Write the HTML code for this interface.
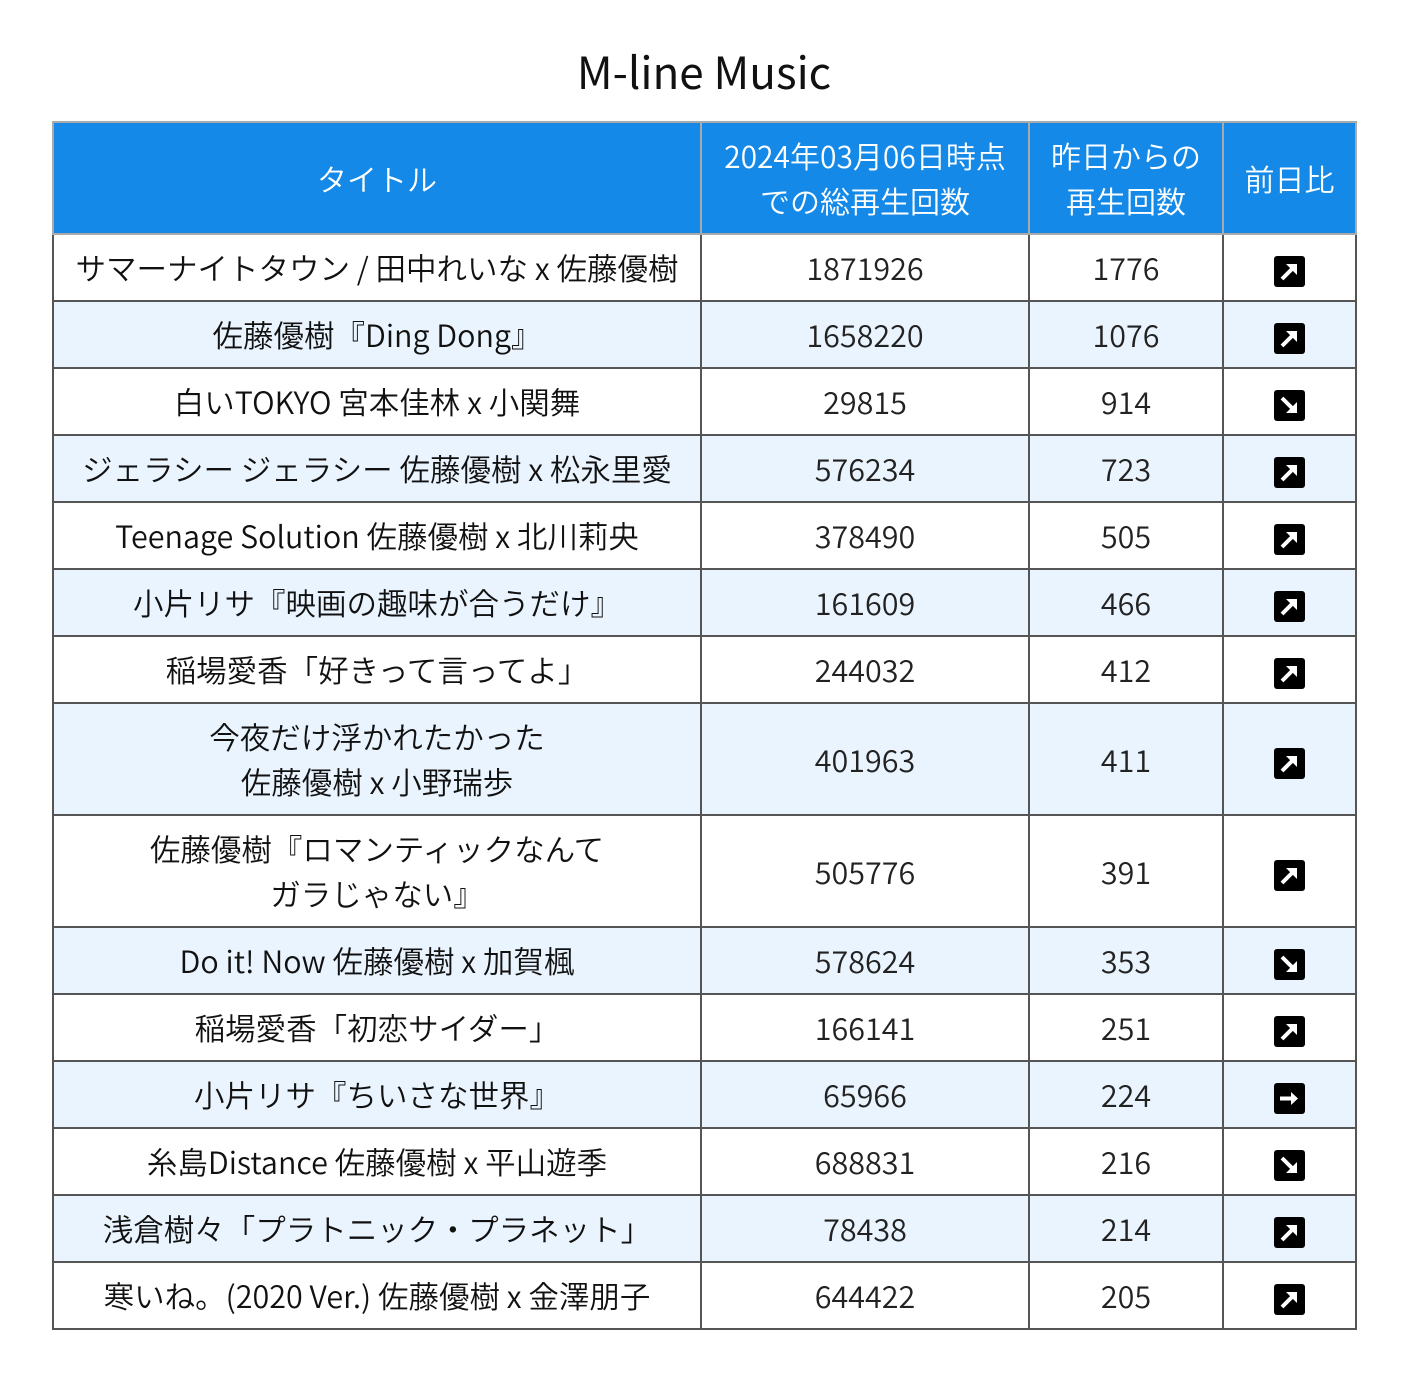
<!DOCTYPE html><html><head><meta charset="utf-8"><style>
body{margin:0;width:1408px;height:1383px;background:#fff;font-family:"Liberation Sans","Noto Sans CJK JP",sans-serif;position:relative;overflow:hidden}
h1{position:absolute;top:40px;left:0;width:1408px;text-align:center;margin:0;font-weight:400;font-size:44px;font-family:"Noto Sans CJK JP",sans-serif;color:#111;line-height:60px}
table{position:absolute;left:52px;top:121px;border-collapse:collapse;font-family:"Noto Sans CJK JP",sans-serif;font-size:30.5px;font-weight:350;color:#111}
td,th{border:2px solid #555;text-align:center;padding:0;line-height:45px}
th{background:#1589e8;color:#fff;font-weight:350;font-size:30px;border-color:#aaa;height:110px}
tr:nth-child(odd) td{background:#eaf4fe}
td.n{color:#222}
.ic{display:inline-block;width:31px;height:31px;background:#000;border-radius:3px;vertical-align:middle}
.ic svg{display:block}
</style></head><body>
<h1>M-line Music</h1>
<table>
<colgroup><col style="width:648px"><col style="width:328px"><col style="width:194px"><col style="width:133px"></colgroup>
<tr><th>タイトル</th><th>2024年03月06日時点<br>での総再生回数</th><th>昨日からの<br>再生回数</th><th>前日比</th></tr>
<tr style="height:67px"><td>サマーナイトタウン / 田中れいな x 佐藤優樹</td><td class=n>1871926</td><td class=n>1776</td><td><span class=ic><svg width=31 height=31><path d="M8 23L19 12" stroke="#fff" stroke-width="4" fill="none"/><path d="M12 8h11v11z" fill="#fff"/></svg></span></td></tr>
<tr style="height:67px"><td>佐藤優樹『Ding Dong』</td><td class=n>1658220</td><td class=n>1076</td><td><span class=ic><svg width=31 height=31><path d="M8 23L19 12" stroke="#fff" stroke-width="4" fill="none"/><path d="M12 8h11v11z" fill="#fff"/></svg></span></td></tr>
<tr style="height:67px"><td>白いTOKYO 宮本佳林 x 小関舞</td><td class=n>29815</td><td class=n>914</td><td><span class=ic><svg width=31 height=31><path d="M8 8L19 19" stroke="#fff" stroke-width="4" fill="none"/><path d="M12 23h11v-11z" fill="#fff"/></svg></span></td></tr>
<tr style="height:67px"><td>ジェラシー ジェラシー 佐藤優樹 x 松永里愛</td><td class=n>576234</td><td class=n>723</td><td><span class=ic><svg width=31 height=31><path d="M8 23L19 12" stroke="#fff" stroke-width="4" fill="none"/><path d="M12 8h11v11z" fill="#fff"/></svg></span></td></tr>
<tr style="height:67px"><td>Teenage Solution 佐藤優樹 x 北川莉央</td><td class=n>378490</td><td class=n>505</td><td><span class=ic><svg width=31 height=31><path d="M8 23L19 12" stroke="#fff" stroke-width="4" fill="none"/><path d="M12 8h11v11z" fill="#fff"/></svg></span></td></tr>
<tr style="height:67px"><td>小片リサ『映画の趣味が合うだけ』</td><td class=n>161609</td><td class=n>466</td><td><span class=ic><svg width=31 height=31><path d="M8 23L19 12" stroke="#fff" stroke-width="4" fill="none"/><path d="M12 8h11v11z" fill="#fff"/></svg></span></td></tr>
<tr style="height:67px"><td>稲場愛香「好きって言ってよ」</td><td class=n>244032</td><td class=n>412</td><td><span class=ic><svg width=31 height=31><path d="M8 23L19 12" stroke="#fff" stroke-width="4" fill="none"/><path d="M12 8h11v11z" fill="#fff"/></svg></span></td></tr>
<tr style="height:112px"><td>今夜だけ浮かれたかった<br>佐藤優樹 x 小野瑞歩</td><td class=n>401963</td><td class=n>411</td><td><span class=ic><svg width=31 height=31><path d="M8 23L19 12" stroke="#fff" stroke-width="4" fill="none"/><path d="M12 8h11v11z" fill="#fff"/></svg></span></td></tr>
<tr style="height:112px"><td>佐藤優樹『ロマンティックなんて<br>ガラじゃない』</td><td class=n>505776</td><td class=n>391</td><td><span class=ic><svg width=31 height=31><path d="M8 23L19 12" stroke="#fff" stroke-width="4" fill="none"/><path d="M12 8h11v11z" fill="#fff"/></svg></span></td></tr>
<tr style="height:67px"><td>Do it! Now 佐藤優樹 x 加賀楓</td><td class=n>578624</td><td class=n>353</td><td><span class=ic><svg width=31 height=31><path d="M8 8L19 19" stroke="#fff" stroke-width="4" fill="none"/><path d="M12 23h11v-11z" fill="#fff"/></svg></span></td></tr>
<tr style="height:67px"><td>稲場愛香「初恋サイダー」</td><td class=n>166141</td><td class=n>251</td><td><span class=ic><svg width=31 height=31><path d="M8 23L19 12" stroke="#fff" stroke-width="4" fill="none"/><path d="M12 8h11v11z" fill="#fff"/></svg></span></td></tr>
<tr style="height:67px"><td>小片リサ『ちいさな世界』</td><td class=n>65966</td><td class=n>224</td><td><span class=ic><svg width=31 height=31><path d="M6 15.5h13" stroke="#fff" stroke-width="4" fill="none"/><path d="M17 9l7 6.5-7 6.5z" fill="#fff"/></svg></span></td></tr>
<tr style="height:67px"><td>糸島Distance 佐藤優樹 x 平山遊季</td><td class=n>688831</td><td class=n>216</td><td><span class=ic><svg width=31 height=31><path d="M8 8L19 19" stroke="#fff" stroke-width="4" fill="none"/><path d="M12 23h11v-11z" fill="#fff"/></svg></span></td></tr>
<tr style="height:67px"><td>浅倉樹々「プラトニック・プラネット」</td><td class=n>78438</td><td class=n>214</td><td><span class=ic><svg width=31 height=31><path d="M8 23L19 12" stroke="#fff" stroke-width="4" fill="none"/><path d="M12 8h11v11z" fill="#fff"/></svg></span></td></tr>
<tr style="height:67px"><td>寒いね。(2020 Ver.) 佐藤優樹 x 金澤朋子</td><td class=n>644422</td><td class=n>205</td><td><span class=ic><svg width=31 height=31><path d="M8 23L19 12" stroke="#fff" stroke-width="4" fill="none"/><path d="M12 8h11v11z" fill="#fff"/></svg></span></td></tr>
</table>
</body></html>
